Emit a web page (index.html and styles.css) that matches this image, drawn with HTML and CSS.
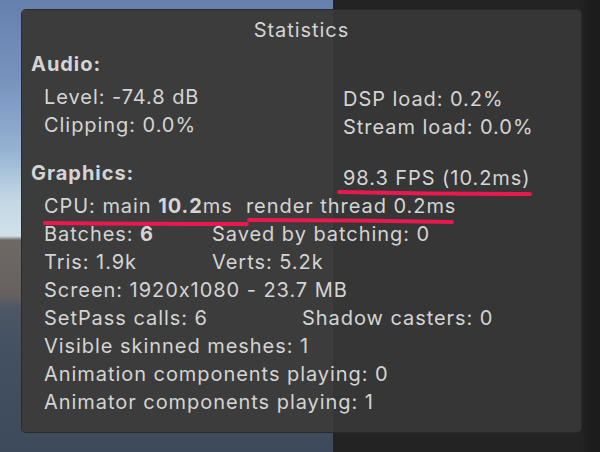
FILE: index.html
```html
<!DOCTYPE html>
<html>
<head>
<meta charset="utf-8">
<link rel="stylesheet" href="styles.css">
</head>
<body>
<div class="panel">
  <div class="title">Statistics</div>
  <div class="sect first">Audio:</div>
  <div class="row"><span class="c-audio">Level: -74.8 dB</span><span class="shift">DSP load: 0.2%</span></div>
  <div class="row"><span class="c-audio">Clipping: 0.0%</span><span class="shift">Stream load: 0.0%</span></div>
  <div class="sect-row">
    <span class="sect-inline">Graphics:</span>
    <span class="fps">98.3 FPS (10.2ms)</span>
  </div>
  <div class="row">CPU: main <b>10.2</b>ms&nbsp; render thread 0.2ms</div>
  <div class="row"><span class="c-narrow">Batches: <b>6</b></span><span>Saved by batching: 0</span></div>
  <div class="row"><span class="c-narrow">Tris: 1.9k</span><span>Verts: 5.2k</span></div>
  <div class="row">Screen: 1920x1080 - 23.7 MB</div>
  <div class="row"><span class="c-mid">SetPass calls: 6</span><span>Shadow casters: 0</span></div>
  <div class="row">Visible skinned meshes: 1</div>
  <div class="row">Animation components playing: 0</div>
  <div class="row">Animator components playing: 1</div>
  <svg class="marks" width="560" height="424" viewBox="0 0 560 424">
    <path d="M317 182 Q 420 184 508 184" />
    <path d="M23 213 Q 120 214 225 214" />
    <path d="M227 210 Q 330 210 430 212" />
  </svg>
</div>
</body>
</html>
```

FILE: styles.css
```css
html, body {
  margin: 0;
  padding: 0;
}
body {
  width: 600px;
  height: 452px;
  overflow: hidden;
  font-family: Inter, "Noto Sans", sans-serif;
  background:
    linear-gradient(to bottom,
      #6580ad 0px, #7793bd 80px, #95b2d2 150px, #c3d8e5 200px, #d0e1e8 236px,
      #6f6966 240px, #66615f 295px, #4c5665 310px, #42505f 360px, #3c4a5b 452px) left top / 333px 452px no-repeat,
    linear-gradient(to right, #232323 0, #232323 580px, #1c1c1c 592px, #1c1c1c 600px);
  display: flow-root;
}
.panel {
  position: relative;
  margin: 10px 19px 0 22px;
  height: 422px;
  box-sizing: border-box;
  padding: 6px 9px 0 9px;
  border-radius: 4px;
  background: linear-gradient(to right, #3c3c3c 0, #3c3c3c 311px, #363636 311px, #363636 100%);
  box-shadow: 0 0 0 1px #2a2a2a;
  color: #d4d4d4;
  font-size: 20px;
  letter-spacing: 0.95px;
  line-height: 28px;
  font-feature-settings: "calt" 0;
}
.title {
  text-align: center;
}
.sect {
  font-weight: 700;
  margin: 6px 0 5px 0;
}
.sect-row {
  display: flex;
  margin: 20px 0 5px 0;
}
.sect-inline {
  font-weight: 700;
  width: 312px;
}
.fps {
  position: relative;
  top: 5px;
}
.row {
  display: flex;
  padding-left: 13px;
  white-space: pre;
}
.row b {
  font-weight: 700;
}
.c-audio { width: 299px; }
.shift { position: relative; top: 2px; }
.c-narrow { width: 168px; }
.c-mid { width: 258px; }
.marks {
  position: absolute;
  left: 0;
  top: 0;
  pointer-events: none;
}
.marks path {
  fill: none;
  stroke: #e8194f;
  stroke-width: 4;
  stroke-linecap: round;
}
```
